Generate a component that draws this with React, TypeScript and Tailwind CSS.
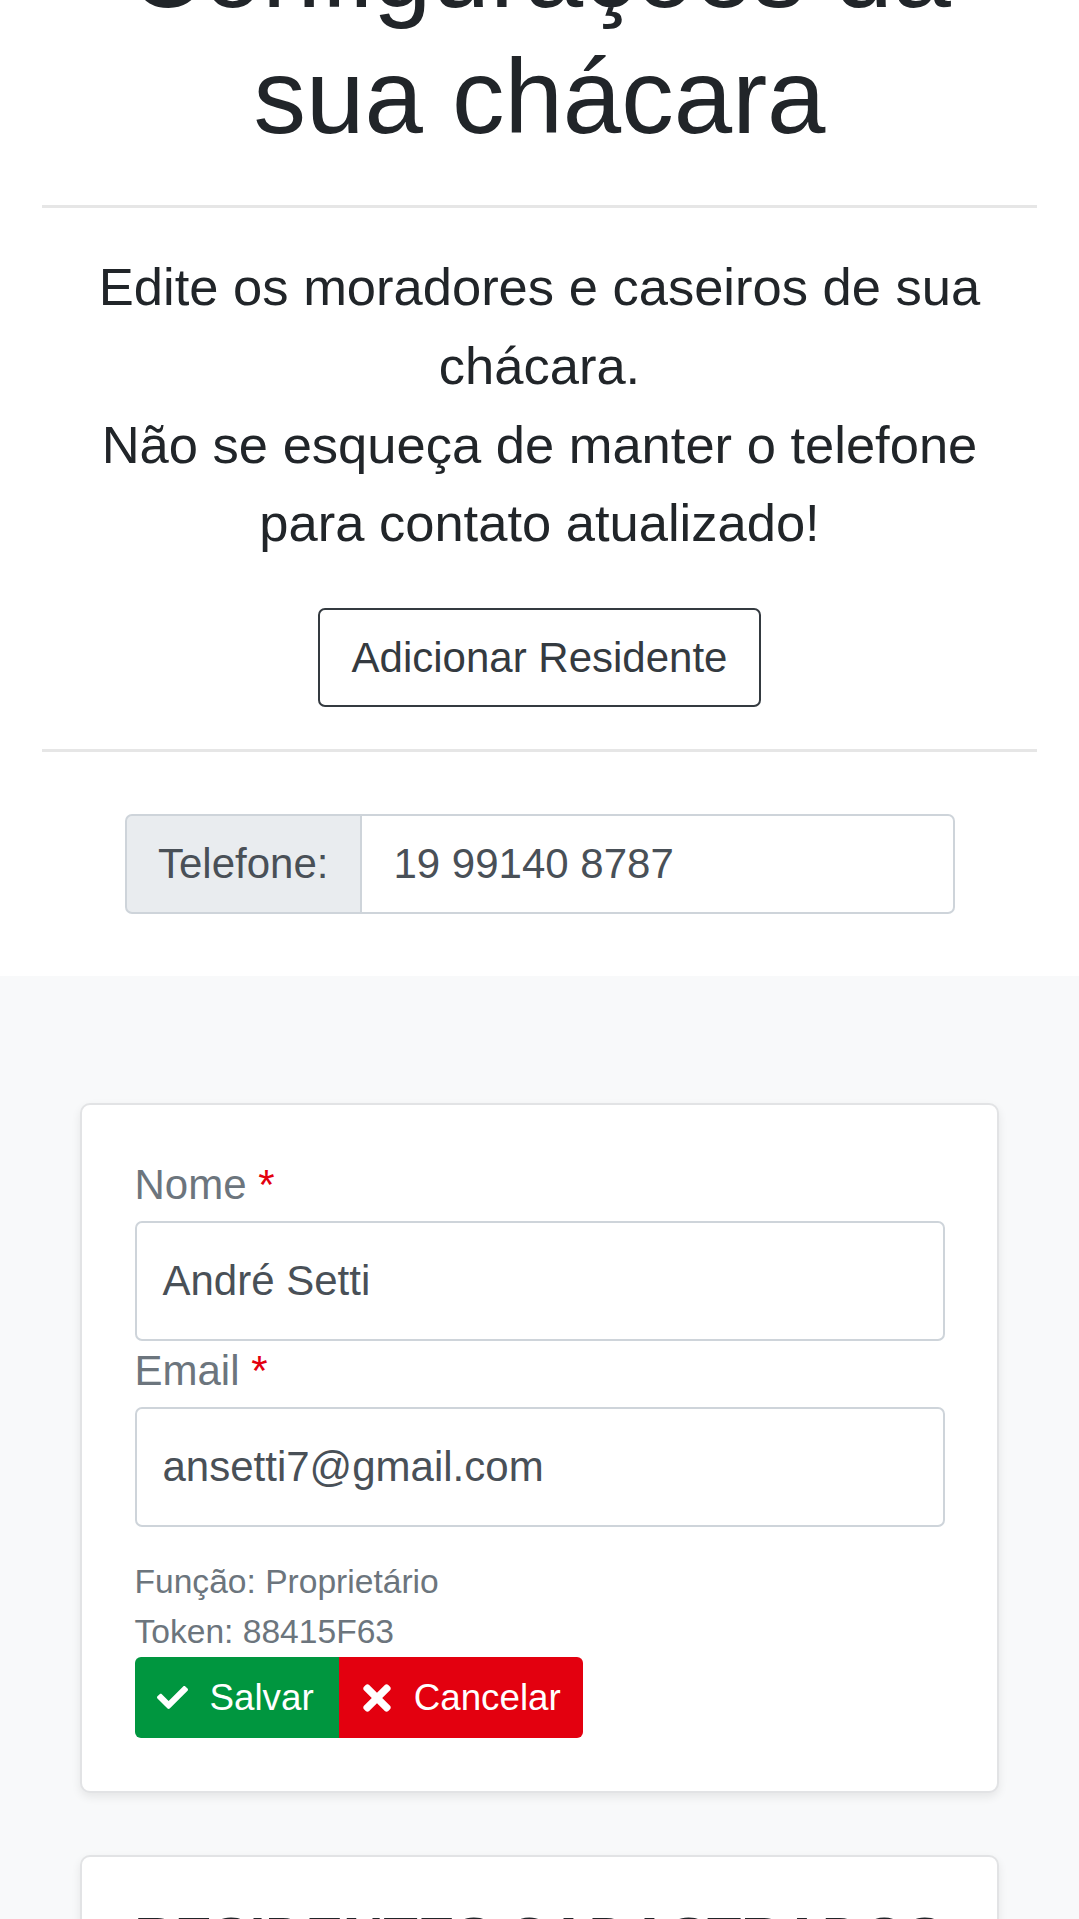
import { FaCheck, FaTimes } from "react-icons/fa";

function Field({ label, value }: { label: string; value: string }) {
    return (
        <div>
            <label className="block text-[42px] leading-[60px] text-[#6c757d] mb-[6px]">
                {label} <span className="text-[#e3000f]">*</span>
            </label>
            <div className="h-[120px] flex items-center border-[2.6px] border-[#ced4da] rounded-[7px] px-[26px] text-[42px] text-[#495057] bg-white">
                {value}
            </div>
        </div>
    );
}

export default function App() {
    return (
        <div className="min-h-screen bg-[#f8f9fa] font-['Liberation_Sans',Arial,sans-serif] overflow-hidden">
            {/* header */}
            <section className="bg-white px-[42px] pb-[62px] mt-[-92px]">
                <h1 className="text-[105px] leading-[126px] text-center text-[#212529] font-normal">
                    Configurações da sua chácara
                </h1>
                <hr className="mt-[45px] border-0 border-t-[3px] border-[#e6e6e6]" />
                <p className="mt-[40px] text-[52.5px] leading-[78.75px] text-center text-[#212529]">
                    Edite os moradores e caseiros de sua chácara.
                    <br />
                    Não se esqueça de manter o telefone para contato atualizado!
                </p>
                <div className="mt-[45px] flex justify-center">
                    <button className="border-[2.6px] border-[#343a40] rounded-[7px] px-[31.5px] py-[15.75px] text-[42px] leading-[63px] text-[#343a40] bg-white">
                        Adicionar Residente
                    </button>
                </div>
                <hr className="mt-[42px] border-0 border-t-[3px] border-[#e6e6e6]" />
                <div className="mt-[62px] mx-auto w-[830px] h-[100px] flex text-[42px] text-[#495057]">
                    <div className="flex items-center px-[31.5px] bg-[#e9ecef] border-[2.6px] border-[#ced4da] rounded-l-[7px]">
                        Telefone:
                    </div>
                    <div className="flex-1 flex items-center px-[31.5px] border-[2.6px] border-l-0 border-[#ced4da] rounded-r-[7px] bg-white">
                        19 99140 8787
                    </div>
                </div>
            </section>

            {/* residents */}
            <section className="pt-[127px] px-[80px]">
                <div className="bg-white border-[2px] border-[#e2e3e5] rounded-[10px] shadow-[0_4px_10px_rgba(0,0,0,0.08)] px-[52.5px] pt-[50px] pb-[53px]">
                    <div className="flex flex-col">
                        <Field label="Nome" value="André Setti" />
                        <Field label="Email" value="ansetti7@gmail.com" />
                    </div>
                    <div className="mt-[30px] text-[33.6px] leading-[50.4px] text-[#6c757d]">
                        <p>Função: Proprietário</p>
                        <p>Token: 88415F63</p>
                    </div>
                    <div className="flex h-[81px] text-[36.75px] text-white">
                        <button className="flex items-center bg-[#00963f] rounded-l-[6px] pl-[22px] pr-[25px]">
                            <FaCheck size={31} />
                            <span className="ml-[22px]">Salvar</span>
                        </button>
                        <button className="flex items-center bg-[#e3000f] rounded-r-[6px] pl-[18px] pr-[22px]">
                            <FaTimes size={40} />
                            <span className="ml-[17px]">Cancelar</span>
                        </button>
                    </div>
                </div>

                <div className="mt-[62px] bg-white border-[2px] border-[#e2e3e5] rounded-[10px] shadow-[0_4px_10px_rgba(0,0,0,0.08)] px-[52.5px] pt-[48px] pb-[52px]">
                    <h2 className="text-[56px] leading-[64px] font-bold text-[#212529] uppercase">
                        Residentes cadastrados
                    </h2>
                </div>
            </section>
        </div>
    );
}
